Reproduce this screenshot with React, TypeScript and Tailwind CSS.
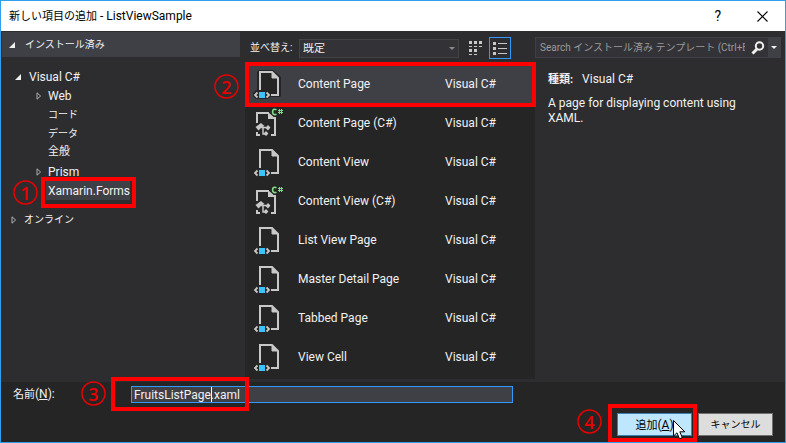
import type { ReactNode } from "react";

const FONT = "font-['Roboto','Noto_Sans_CJK_JP',sans-serif]";

function Step({ n, box, circle }: { n: number; box: string; circle: string }) {
  return (
    <>
      <span className={`pointer-events-none absolute z-10 border-4 border-[#ff0000] ${box}`} />
      <span
        className={`pointer-events-none absolute z-10 grid size-[25px] place-items-center font-['Open_Sans',sans-serif] text-lg leading-none font-semibold text-[#e80000] ${circle}`}
      >
        <svg viewBox="0 0 25 25" className="col-start-1 row-start-1 size-full" aria-hidden="true">
          <circle cx="12.500" cy="12.500" r="11.500" fill="none" stroke="#e80000" strokeWidth="1.500" />
        </svg>
        <span className="col-start-1 row-start-1">{n}</span>
      </span>
    </>
  );
}

function OpenArrow() {
  return (
    <svg width="6" height="6" viewBox="0 0 6 6" className="shrink-0" aria-hidden="true">
      <path d="M6 0V6H0Z" fill="#f1f1f1" />
    </svg>
  );
}

function ClosedArrow() {
  return (
    <svg width="6" height="8" viewBox="0 0 6 8" className="shrink-0" aria-hidden="true">
      <path d="M1 .8V7.2L4.6 4Z" fill="none" stroke="#b0b0b0" />
    </svg>
  );
}

function XamlIcon({ selected }: { selected: boolean }) {
  return (
    <svg width="30" height="32" viewBox="0 0 30 32" className="shrink-0" aria-hidden="true">
      {selected && (
        <path d="M6 2H20L28 9V28L27 29H17L15 31H3L0 28V25L3 22H4V4Z" fill="#252526" />
      )}
      <path d="M7 22V4H19L25 10V27H18" fill="none" stroke="#c8c8c8" strokeWidth="2" />
      <path d="M19 4L25 10H19Z" fill="#c8c8c8" stroke="#c8c8c8" />
      <rect x="6" y="24" width="6" height="6" fill="#3cc3ff" />
      <path d="M4.500 24.500L2 27L4.500 29.500M13.500 24.500L16 27L13.500 29.500" fill="none" stroke="#c8c8c8" strokeWidth="1.800" />
    </svg>
  );
}

function CSharpIcon() {
  return (
    <svg width="30" height="32" viewBox="0 0 30 32" className="shrink-0" aria-hidden="true">
      <path d="M4 16V6H16M22 10V28H18M4 25V28H7" fill="none" stroke="#c8c8c8" strokeWidth="2" />
      <path d="M15 5L23 12H15Z" fill="#c8c8c8" />
      <path d="M2.500 20L8 16L11.500 19L8 21L5.500 23.500Z" fill="#c8c8c8" />
      <path d="M8 20.500H15M10 20V27H13" fill="none" stroke="#c8c8c8" strokeWidth="1.500" />
      <path d="M15 18L17.500 20.500L15 23.500L12.500 21ZM13 24L15.500 26.500L13 29L10.500 26.500Z" fill="#c8c8c8" />
      <path d="M23.500 2.800C21 1.500 19.600 2.800 19.600 4.900C19.600 7 21 8.200 23.500 7.200" fill="none" stroke="#83d888" strokeWidth="1.700" />
      <path d="M26.500 2V7M28.500 2V7M25 3.500H30M25 5.500H30" fill="none" stroke="#83d888" />
    </svg>
  );
}

function TreeRow({ children, arrow, indent }: { children: ReactNode; arrow?: ReactNode; indent: string }) {
  return (
    <li className={`flex h-[19px] items-center ${indent}`}>
      <span className="flex w-3 shrink-0">{arrow}</span>
      {children}
    </li>
  );
}

const templates = [
  { name: "Content Page", code: false },
  { name: "Content Page (C#)", code: true },
  { name: "Content View", code: false },
  { name: "Content View (C#)", code: true },
  { name: "List View Page", code: false },
  { name: "Master Detail Page", code: false },
  { name: "Tabbed Page", code: false },
  { name: "View Cell", code: false },
];

export default function App() {
  return (
    <div className={`flex min-h-screen flex-col border border-[#2f9fee] bg-[#2d2d30] text-xs text-[#f1f1f1] ${FONT}`}>
      <header className="flex h-[30px] items-center bg-white pr-[17px] pl-2 text-black">
        <h1 className="flex-1">
          <span className="text-[11px]">新しい項目の追加</span> - ListViewSample
        </h1>
        <button aria-label="ヘルプ" className="mr-9 text-sm leading-none">?</button>
        <button aria-label="閉じる">
          <svg width="11" height="11" viewBox="0 0 11 11">
            <path d="M.5 .5L10.500 10.500M10.500 .5L.5 10.500" stroke="#000" strokeWidth="1.100" />
          </svg>
        </button>
      </header>

      <main className="grid flex-1 grid-cols-[244px_290px_1fr]">
        <nav className="pt-px pl-px">
          <h2 className="mr-[5px] flex h-[25px] items-center gap-[10px] bg-[#3f3f46] pl-[7px] text-[10px]">
            <OpenArrow />
            インストール済み
          </h2>
          <ul className="pt-[10px]">
            <TreeRow indent="pl-[13px]" arrow={<OpenArrow />}>
              <span className="pl-[2px]">Visual C#</span>
            </TreeRow>
            <TreeRow indent="pl-[34px]" arrow={<ClosedArrow />}>Web</TreeRow>
            <TreeRow indent="pl-[34px]"><span className="text-[10px]">コード</span></TreeRow>
            <TreeRow indent="pl-[34px]"><span className="text-[10px]">データ</span></TreeRow>
            <TreeRow indent="pl-[34px]"><span className="text-[11px]">全般</span></TreeRow>
            <TreeRow indent="pl-[34px]" arrow={<ClosedArrow />}>Prism</TreeRow>
            <li className="flex h-[19px] pl-11">
              <span className="relative flex items-center bg-[#3f3f46] pl-[2px]">
                Xamarin.Forms
                <Step n={1} box="-top-1 -left-[5px] h-[31px] w-[95px]" circle="top-[-1px] left-[-33px]" />
              </span>
            </li>
            <li className="mt-[10px] flex h-[19px] items-center pl-[9px]">
              <span className="flex w-[13px]"><ClosedArrow /></span>
              <span className="text-[10px]">オンライン</span>
            </li>
          </ul>
        </nav>

        <section className="flex flex-col pb-[3px]">
          <div className="flex h-[31px] items-center pt-[3px] pl-[5px]">
            <label htmlFor="sort" className="w-[49px] shrink-0 text-[10px] whitespace-nowrap">並べ替え:</label>
            <div className="relative h-[19px] w-40">
              <select
                id="sort"
                className="block h-full w-full appearance-none border border-[#434346] bg-[#333337] pl-[3px] text-[11px] leading-none"
              >
                <option>既定</option>
              </select>
              <svg width="6" height="3" viewBox="0 0 6 3" className="pointer-events-none absolute top-2 right-1">
                <path d="M0 0H6L3 3Z" fill="#8a8a8a" />
              </svg>
            </div>
            <button aria-label="中アイコン" className="mr-[7px] ml-[10px]">
              <svg width="13" height="14" viewBox="0 0 13 14" fill="#c8c8c8" shapeRendering="crispEdges">
                <path d="M0 0h3v3h-3zM5 0h3v3h-3zM10 0h3v3h-3zM0 5h3v1h-3zM5 5h3v1h-3zM10 5h3v1h-3zM0 8h3v3h-3zM5 8h3v3h-3zM0 13h3v1h-3zM5 13h3v1h-3z" />
              </svg>
            </button>
            <button aria-label="一覧" className="flex size-[22px] items-center justify-center border border-[#3399ff]">
              <svg width="14" height="13" viewBox="0 0 14 13" fill="#c8c8c8" shapeRendering="crispEdges">
                <path d="M0 0h3v3h-3zM5 1h9v1h-9zM0 5h3v3h-3zM5 6h9v1h-9zM0 10h3v3h-3zM5 11h9v1h-9z" />
              </svg>
            </button>
          </div>
          <ul className="relative flex-1 bg-[#252526] pt-[2px]">
            {templates.map((t, i) => (
              <li
                key={t.name}
                className={`flex h-[39px] items-center pl-2 ${i === 0 ? "bg-[#3f3f46]" : ""}`}
              >
                {t.code ? <CSharpIcon /> : <XamlIcon selected={i === 0} />}
                <span className="ml-[15px] w-[147px]">{t.name}</span>
                <span>Visual C#</span>
              </li>
            ))}
            <Step n={2} box="top-0 right-[-1px] left-0 h-[45px]" circle="top-[12px] left-[-31px]" />
          </ul>
        </section>

        <aside className="pt-[6px] pr-1">
          <div className="flex h-[21px] items-center border border-[#3f3f46] bg-[#333337]">
            <input
              type="text"
              aria-label="テンプレートの検索"
              placeholder="Search インストール済み テンプレート (Ctrl+E)"
              className="h-full min-w-0 flex-1 pl-1 text-[10px] outline-none placeholder:text-[#999999]"
            />
            <button aria-label="検索" className="mr-[3px] ml-[6px]">
              <svg width="14" height="14" viewBox="0 0 14 14" fill="none" stroke="#f1f1f1">
                <circle cx="8.500" cy="5" r="3.700" strokeWidth="2" />
                <path d="M6 8L1.500 12.500" strokeWidth="3" />
              </svg>
            </button>
            <button aria-label="検索オプション" className="flex h-full w-3 items-center justify-center bg-[#3f3f46]">
              <svg width="6" height="3" viewBox="0 0 6 3">
                <path d="M0 0H6L3 3Z" fill="#f1f1f1" />
              </svg>
            </button>
          </div>
          <div className="pr-5 pl-[13px]">
            <p className="mt-3 leading-[18px]">
              <b className="mr-[9px] text-[11px]">種類:</b>Visual C#
            </p>
            <p className="mt-[7px] leading-[15px]">A page for displaying content using XAML.</p>
          </div>
        </aside>
      </main>

      <footer className="h-[60px] bg-[#252526] pt-1 pr-3 pl-3">
        <div className="flex items-center">
          <label htmlFor="name" className="w-[118px]">
            <span className="text-[11px]">名前</span>(<u>N</u>):
          </label>
          <div className="relative w-[382px]">
            <input
              id="name"
              defaultValue="FruitsListPage.xaml"
              className="block h-[17px] w-full border border-[#3399ff] bg-[#3f3f46] px-[2px] outline-none"
            />
            <span className="absolute top-px left-[80px] h-[15px] w-px bg-white" />
            <Step n={3} box="top-[-9px] left-[-20px] h-[34px] w-[138px]" circle="top-[-5px] left-[-50px]" />
          </div>
        </div>
        <div className="mt-[10px] flex justify-end gap-[6px] text-black">
          <div className="relative">
            <button className="block h-[23px] w-[75px] border border-[#3c7fb1] bg-[#bee6fd] leading-none">
              <span className="text-[11px]">追加</span>(<u>A</u>)
            </button>
            <Step n={4} box="top-[-9px] left-[-9px] h-[38px] w-[89px]" circle="top-[-4px] left-[-40px]" />
            <svg width="13" height="20" viewBox="0 0 13 20" className="pointer-events-none absolute top-[7px] left-[56px] z-20">
              <path d="M.5 .5V16L4 12.800L6.500 18.800L9.300 17.600L6.800 11.800H11.800Z" fill="#fff" stroke="#000" />
            </svg>
          </div>
          <button className="h-[23px] w-[75px] border border-[#707070] bg-[#dddddd] text-[10px] leading-none">キャンセル</button>
        </div>
      </footer>
    </div>
  );
}
